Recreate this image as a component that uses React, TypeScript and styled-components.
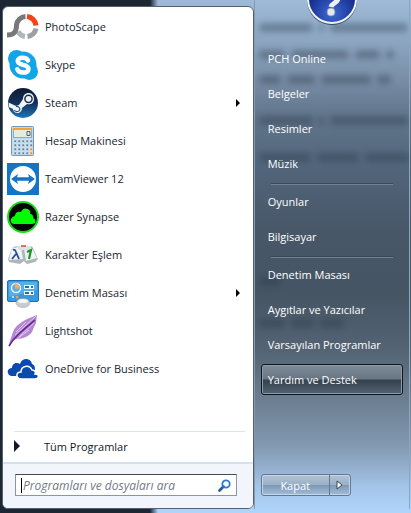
import React from 'react';
import styled, { createGlobalStyle } from 'styled-components';

const GlobalStyle = createGlobalStyle`
  * { box-sizing: border-box; }
  html, body { margin: 0; padding: 0; }
  body, button, input { font-family: "Open Sans", "Noto Sans", sans-serif; font-size: 11px; }
`;

const Shell = styled.main`
  position: relative;
  isolation: isolate;
  display: grid;
  grid-template-columns: 8fr 5fr;
  min-height: 100vh;
  overflow: hidden;
  padding: 6px 0 4px 2px;
  background:
    linear-gradient(to right, #1c2733 0 150px, rgba(28, 39, 51, 0) 158px) no-repeat,
    linear-gradient(#9fbad8 0, #91abc8 6%, #7d93ac 14%, #60748a 23%, #52667c 32%, #485768 45%, #465564 57%, #536373 68%, #6c7f91 78%, #8299b1 87%, #a4c5e9 95%, #b0d5fb 100%);
`;

const Programs = styled.section`
  min-width: 0;
  display: flex;
  flex-direction: column;
  background: #fff;
  border: 1px solid #53616f;
  border-radius: 6px;
  overflow: hidden;
`;

const List = styled.ul`
  list-style: none;
  margin: 0;
  padding: 1px 4px;
  flex: 1;
`;

const Program = styled.button`
  display: grid;
  grid-template-columns: 32px 1fr 13px;
  column-gap: 6px;
  align-items: center;
  width: 100%;
  height: 38px;
  padding: 0;
  border: 0;
  background: none;
  color: #202530;
  text-align: left;
  font-size: 11px;
  svg { display: block; }
  span { padding-bottom: 2px; }
`;

const AllPrograms = styled.button`
  display: flex;
  align-items: center;
  gap: 24px;
  height: 31px;
  margin: 0 8px 0 11px;
  padding: 0 0 2px;
  border: 0;
  border-top: 1px solid #d6e5f2;
  background: none;
  color: #101828;
  font-size: 11px;
`;

const Footer = styled.form`
  height: 46px;
  padding: 10px 16px 0 12px;
  border-top: 2px solid #d4e2f0;
  background: #f2f5fb;
`;

const Search = styled.label`
  display: flex;
  align-items: center;
  height: 22px;
  padding: 0 5px 0 3px;
  background: #fff;
  border: 1px solid #8c96a0;
  border-top-color: #464b50;
  border-radius: 1px;
`;

const Caret = styled.span`
  width: 1px;
  height: 15px;
  margin: 0 1px 0 2px;
  background: #000;
`;

const SearchInput = styled.input`
  flex: 1;
  min-width: 0;
  height: 18px;
  padding: 0;
  border: 0;
  outline: 0;
  background: none;
  font-size: 12px;
  font-style: italic;
  color: #222;
  &::placeholder { color: #727984; opacity: 1; }
`;

const SearchButton = styled.button`
  padding: 0;
  border: 0;
  background: none;
  svg { display: block; }
`;

const Places = styled.nav`
  min-width: 0;
  display: flex;
  flex-direction: column;
  margin: -6px 1px 0 0;
  padding: 0 6px 13px 6px;
  border-left: 1px solid #8799aa;
  border-right: 1px solid #8ba6c0;
`;

const Avatar = styled.div`
  align-self: center;
  width: 52px;
  height: 26px;
  margin-bottom: 17px;
  svg { display: block; }
`;

const Place = styled.a<{ $active?: boolean }>`
  display: flex;
  align-items: center;
  height: 31px;
  margin-bottom: 4px;
  padding: 0 6px;
  border: 1px solid ${p => (p.$active ? '#10161c' : 'transparent')};
  border-radius: 3px;
  color: #fff;
  text-decoration: none;
  white-space: nowrap;
  background: ${p => (p.$active ? 'linear-gradient(#7e8b98, #687685 48%, #34414e 52%, #536373 100%)' : 'none')};
  box-shadow: ${p => (p.$active ? 'inset 0 0 0 1px #8e9ba8' : 'none')};
`;

const Rule = styled.hr`
  width: calc(100% - 20px);
  height: 2px;
  margin: 0 auto 1px;
  border: 0;
  border-top: 1px solid #3d4957;
  border-bottom: 1px solid #71808f;
`;

const Power = styled.div`
  display: flex;
  align-self: flex-start;
  height: 22px;
  margin-top: auto;
  border: 1px solid #63788f;
  border-radius: 3px;
  box-shadow: inset 0 0 0 1px #c4d6e8;
  background: linear-gradient(#b1c3d6, #9bb0c6 48%, #7f99b5 52%, #a1bddb);
`;

const PowerButton = styled.button<{ $narrow?: boolean }>`
  display: flex;
  align-items: center;
  justify-content: center;
  width: ${p => (p.$narrow ? 21 : 67)}px;
  padding: 0;
  border: 0;
  border-left: ${p => (p.$narrow ? '1px solid #63788f' : '0')};
  background: none;
  color: #fff;
`;

const Backdrop = styled.div`
  position: absolute;
  z-index: -1;
  top: 23px;
  left: 62%;
  right: 2px;
  overflow: hidden;
  padding: 0 0 8px 4px;
  filter: blur(3px);
  opacity: 0.38;
`;

const Smudges = styled.div<{ $gap: number }>`
  display: flex;
  gap: 6px;
  margin-top: ${p => p.$gap}px;
`;

const Smudge = styled.i<{ $width: number }>`
  flex: none;
  width: ${p => p.$width}px;
  height: 9px;
  border-radius: 4px;
  background: #283747;
`;

const smudgeRows = [
  { gap: 0, words: [54, 5, 78] },
  { gap: 18, words: [26, 58, 25, 8] },
  { gap: 16, words: [22, 28, 50, 14] },
  { gap: 32, words: [54, 5, 78] },
  { gap: 28, words: [52, 42, 50] },
  { gap: 115, words: [22] },
  { gap: 33, words: [26, 23, 24] },
];

const PhotoScapeIcon = () => (
  <svg width="32" height="32" viewBox="0 0 32 32" fill="none" strokeWidth="5">
    <path d="M20 5.500A10 10 0 0 1 29 14.500" stroke="#f8411b" />
    <path d="M29 17.500A10 10 0 0 1 20.500 25.500" stroke="#9da1a6" />
    <path d="M18 25.500A10 10 0 0 1 11 20.500" stroke="#b3b6ba" />
    <path d="M18.500 5.500A9.500 9.500 0 0 0 9.500 14C9.500 21 7 24 0 24" stroke="#77787a" />
  </svg>
);
const SkypeIcon = () => (
  <svg width="32" height="32" viewBox="0 0 32 32">
    <circle cx="9.500" cy="9.500" r="8.500" fill="#12a5e8" /><circle cx="22.500" cy="22.500" r="8.500" fill="#12a5e8" />
    <circle cx="16" cy="16" r="13.500" fill="#12a5e8" />
    <path d="M21 11.500C19.500 8 10.500 7.500 10.700 12.200C11 17 21.500 14.800 21.500 20C21.500 25 11.500 24.500 10.300 20.200" fill="none" stroke="#fff" strokeWidth="4.500" strokeLinecap="round" />
  </svg>
);
const SteamIcon = () => (
  <svg width="32" height="32" viewBox="0 0 32 32">
    <defs><linearGradient id="steam" x2="0" y2="1"><stop stopColor="#111d32" /><stop offset=".5" stopColor="#14305a" /><stop offset="1" stopColor="#1c76ba" /></linearGradient></defs>
    <circle cx="16" cy="16" r="15" fill="url(#steam)" />
    <path d="M1.500 15.500L9 19L12 18L16 12C16 4 27 4 27 12C27 17 22 18 20 17L15 21C15 28 6 27 6 22L2 20Z" fill="#f2f5f8" />
    <circle cx="21.500" cy="11.800" r="3.600" fill="#f2f5f8" stroke="#1a2d4a" strokeWidth="1.500" />
    <path d="M9 19.500C14 19 14 25 9.500 24.500L7 23.500" fill="none" stroke="#1b5288" strokeWidth="1.200" />
  </svg>
);
const CalculatorIcon = () => (
  <svg width="32" height="32" viewBox="0 0 32 32">
    <rect x="4.500" y="1.500" width="22" height="29" rx="1" fill="#bfdbef" stroke="#6f9abe" />
    <rect x="6.500" y="4.500" width="18" height="8" fill="#e8ebd9" stroke="#8bacc3" />
    <path d="M6 4h19" stroke="#f3a13d" strokeWidth="2" />
    <path d="M20 6.500h3v4h-3z" fill="none" stroke="#4d6070" />
    {[15, 19, 23, 27].map(y => [7, 11, 15, 19, 23].map(x => (
      <rect key={`${x}-${y}`} x={x} y={y} width="2.500" height="2.500" fill={x === 23 && y > 20 ? '#f08a1b' : '#647f9b'} stroke="#eef7fc" strokeWidth=".5" />
    )))}
  </svg>
);
const TeamViewerIcon = () => (
  <svg width="32" height="32" viewBox="0 0 32 32">
    <path d="M0 0h32v32H0z" fill="#1474c5" /><circle cx="16" cy="16" r="13" fill="#fff" />
    <path d="M4 16L11 11L10 14.300H22L21 11L28 16L21 21L22 17.700H10L11 21Z" fill="#1474c5" />
  </svg>
);
const RazerIcon = () => (
  <svg width="32" height="32" viewBox="0 0 32 32">
    <circle cx="16" cy="16" r="15" fill="#030603" stroke="#17df17" strokeWidth="2" />
    <path d="M7 23C2 22 3 16 8 15C8 11 12 10 14 11C17 4 25 9 23 13C25 13 27 15 26 17C30 19 29 23 25 23Z" fill="#05fb05" />
  </svg>
);
const CharacterIcon = () => (
  <svg width="32" height="32" viewBox="0 0 32 32">
    <path d="M5 9L9 7H25L31 20L28 23L20 25L17 22L13 25L2 23L1 20Z" fill="#aeb6bd" />
    <path d="M5 9L14 8L16 20L2 21ZM17 9L25 9L30 19L19 22Z" fill="#f0f4f5" />
    <path d="M9 7H25L22 11H12Z" fill="#dce2e6" /><path d="M14 7h5" stroke="#b95926" strokeWidth="1.500" />
    <path d="M6 11Q8 10 9 13L12 20M9 15L5 20" fill="none" stroke="#234ba0" strokeWidth="1.800" />
    <path d="M20 13L24 11L22 20" fill="none" stroke="#229229" strokeWidth="2.200" />
  </svg>
);
const ControlPanelIcon = () => (
  <svg width="32" height="32" viewBox="0 0 32 32">
    <rect x=".5" y="3.500" width="31" height="21" rx="1.500" fill="#3a98dc" stroke="#1c70b4" />
    <path d="M2 5h28v8L2 20Z" fill="#57afe8" />
    <circle cx="9" cy="11" r="4.500" fill="#55aee5" stroke="#e2f2fc" strokeWidth="1.500" />
    <path d="M8 5L14 11L8 12Z" fill="#f5ad58" />
    <g fill="#eef8fd"><rect x="17" y="8" width="10" height="4" /><rect x="17" y="14" width="10" height="4" /></g>
    <path d="M18 10h4M24 10h2M18 16h4M24 16h2" stroke="#2570a5" strokeWidth="2" />
    <circle cx="6" cy="20" r="1" fill="#e6efe9" /><circle cx="10" cy="20" r="1.500" fill="#f29c45" />
    <ellipse cx="16" cy="26" rx="7" ry="4.500" fill="#c8cdd1" stroke="#929ca4" strokeWidth=".5" /><ellipse cx="16" cy="24" rx="5" ry="2" fill="#f4f5f6" />
  </svg>
);
const FeatherIcon = () => (
  <svg width="32" height="32" viewBox="0 0 32 32">
    <path d="M30 0C22 3 9 8 6 17L2 29L9 24C17 24 22 21 25 17L27 12L29 8Z" fill="#b487d5" />
    <path d="M29 1L8 20M27 8L12 22M22 15L10 24M19 7L9 17" stroke="#e0c6ed" strokeWidth="1" />
    <path d="M2 31C7 22 16 15 28 5" fill="none" stroke="#652788" strokeWidth="1.600" />
  </svg>
);
const OneDriveIcon = () => (
  <svg width="32" height="32" viewBox="0 0 32 32">
    <path d="M4 23C-1 21 0 15 5 15C5 10 10 9 13 11C15 4 24 5 25 11C28 12 28 15 28 17L17 23Z" fill="#0b49ad" />
    <path d="M14 26C8 25 9 19 14 19C14 13 22 11 25 17C28 17 29 19 28 21C33 21 32 26 28 26Z" fill="#0b49ad" stroke="#fff" strokeWidth="1.500" />
  </svg>
);
const Arrow = () => <svg width="4" height="8" viewBox="0 0 4 8"><path d="M0 0L4 4L0 8Z" fill="#000" /></svg>;

const programs = [
  { name: 'PhotoScape', icon: <PhotoScapeIcon /> },
  { name: 'Skype', icon: <SkypeIcon /> },
  { name: 'Steam', icon: <SteamIcon />, submenu: true },
  { name: 'Hesap Makinesi', icon: <CalculatorIcon /> },
  { name: 'TeamViewer 12', icon: <TeamViewerIcon /> },
  { name: 'Razer Synapse', icon: <RazerIcon /> },
  { name: 'Karakter Eşlem', icon: <CharacterIcon /> },
  { name: 'Denetim Masası', icon: <ControlPanelIcon />, submenu: true },
  { name: 'Lightshot', icon: <FeatherIcon /> },
  { name: 'OneDrive for Business', icon: <OneDriveIcon /> },
];

const groups = [
  ['PCH Online', 'Belgeler', 'Resimler', 'Müzik'],
  ['Oyunlar', 'Bilgisayar'],
  ['Denetim Masası', 'Aygıtlar ve Yazıcılar', 'Varsayılan Programlar', 'Yardım ve Destek'],
];

export default function App() {
  return (
    <>
      <GlobalStyle />
      <Shell>
        <Backdrop aria-hidden="true">
          {smudgeRows.map((row, i) => (
            <Smudges key={i} $gap={row.gap}>
              {row.words.map((width, j) => <Smudge key={j} $width={width} />)}
            </Smudges>
          ))}
        </Backdrop>
        <Programs>
          <List>
            {programs.map(p => (
              <li key={p.name}>
                <Program type="button">{p.icon}<span>{p.name}</span>{p.submenu && <Arrow />}</Program>
              </li>
            ))}
          </List>
          <AllPrograms type="button">
            <svg width="6" height="12" viewBox="0 0 6 12"><path d="M0 0L6 6L0 12Z" fill="#111827" /></svg>
            Tüm Programlar
          </AllPrograms>
          <Footer onSubmit={e => e.preventDefault()}>
            <Search>
              <Caret />
              <SearchInput type="text" aria-label="Programları ve dosyaları ara" placeholder="Programları ve dosyaları ara" />
              <SearchButton type="submit" aria-label="Ara">
                <svg width="13" height="13" viewBox="0 0 13 13" fill="none">
                  <path d="M5.500 7.500L1.500 11.500" stroke="#245a9c" strokeWidth="2.600" strokeLinecap="round" />
                  <circle cx="8" cy="5" r="3.700" stroke="#2b7bca" strokeWidth="1.800" />
                </svg>
              </SearchButton>
            </Search>
          </Footer>
        </Programs>
        <Places>
          <Avatar>
            <svg width="52" height="26" viewBox="0 0 52 26">
              <defs><radialGradient id="help" cy=".8"><stop stopColor="#3f6ad3" /><stop offset="1" stopColor="#172f91" /></radialGradient></defs>
              <circle cx="26" cy="0" r="25" fill="#33475d" />
              <circle cx="26" cy="-1" r="24" fill="url(#help)" stroke="#f0f3f7" strokeWidth="2" />
              <path d="M18 -2C18 -9 33 -9 32 -1C31 3 26 3 25 7" fill="none" stroke="#eef0f3" strokeWidth="5" />
              <circle cx="25" cy="12" r="4" fill="#e5e8ee" stroke="#8b93a8" strokeWidth=".7" />
            </svg>
          </Avatar>
          {groups.map((group, i) => (
            <React.Fragment key={i}>
              {i > 0 && <Rule />}
              {group.map(name => <Place key={name} href="#" $active={name === 'Yardım ve Destek'}>{name}</Place>)}
            </React.Fragment>
          ))}
          <Power>
            <PowerButton type="button">Kapat</PowerButton>
            <PowerButton type="button" $narrow aria-label="Kapatma seçenekleri">
              <svg width="7" height="10" viewBox="0 0 7 10"><path d="M1 1L6 5L1 9Z" fill="#fff" stroke="#37475a" /></svg>
            </PowerButton>
          </Power>
        </Places>
      </Shell>
    </>
  );
}
